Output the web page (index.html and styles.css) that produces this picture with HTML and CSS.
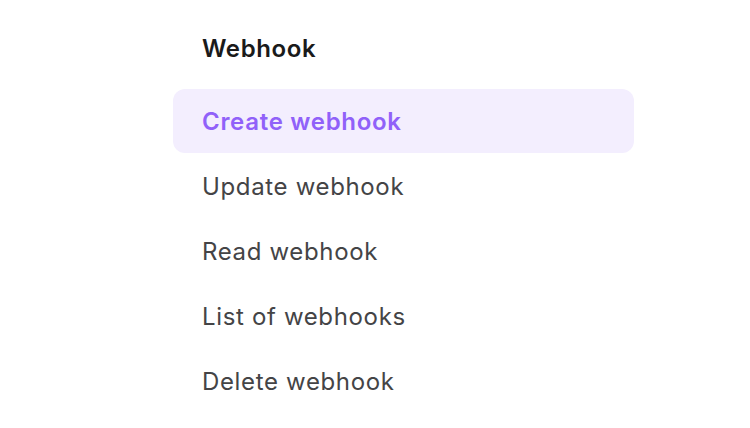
FILE: index.html
```html
<!DOCTYPE html>
<html>
<head>
<meta charset="utf-8">
<link rel="stylesheet" href="styles.css">
</head>
<body>
<nav class="menu">
  <div class="menu-title">Webhook</div>
  <ul class="menu-list">
    <li class="menu-item active">Create webhook</li>
    <li class="menu-item">Update webhook</li>
    <li class="menu-item">Read webhook</li>
    <li class="menu-item">List of webhooks</li>
    <li class="menu-item">Delete webhook</li>
  </ul>
</nav>
</body>
</html>
```
FILE: styles.css
```css
html, body {
  margin: 0;
  padding: 0;
  background: #ffffff;
}
body {
  font-family: Inter, "Noto Sans", sans-serif;
  width: 750px;
  height: 428px;
  overflow: hidden;
}
.menu {
  margin-left: 173px;
  width: 461px;
  padding-top: 33px;
}
.menu-title {
  padding-left: 29px;
  font-size: 24px;
  font-weight: 600;
  letter-spacing: 0.6px;
  color: #1a1a1a;
  line-height: 32px;
  margin-bottom: 24px;
}
.menu-list {
  list-style: none;
  margin: 0;
  padding: 0;
}
.menu-item {
  height: 65px;
  display: flex;
  align-items: center;
  padding-left: 29px;
  font-size: 24px;
  letter-spacing: 0.65px;
  color: #444446;
  border-radius: 12px;
}
.menu-item.active {
  height: 64px;
  margin-bottom: 1px;
  background: #f3eefe;
  color: #9061f9;
  font-weight: 600;
  letter-spacing: 0.7px;
}
```
